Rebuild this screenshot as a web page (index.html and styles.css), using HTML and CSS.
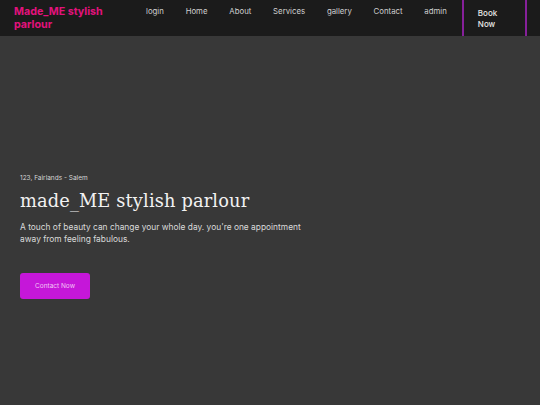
FILE: index.html
```html
<!DOCTYPE html>
<html lang="en">
<head>
<meta charset="utf-8">
<title>made_ME stylish parlour</title>
<link rel="stylesheet" href="styles.css">
</head>
<body>
<header class="topbar">
  <a class="brand" href="#">Made_ME stylish parlour</a>
  <nav class="nav">
    <a href="#">login</a>
    <a href="#">Home</a>
    <a href="#">About</a>
    <a href="#">Services</a>
    <a href="#">gallery</a>
    <a href="#">Contact</a>
    <a href="#">admin</a>
  </nav>
  <a class="book" href="#">Book<br>Now</a>
</header>
<main class="hero">
  <p class="address">123, Fairlands - Salem</p>
  <h1 class="title">made_ME stylish parlour</h1>
  <p class="lead">A touch of beauty can change your whole day. you're one appointment away from feeling fabulous.</p>
  <a class="cta" href="#">Contact Now</a>
</main>
</body>
</html>
```
FILE: styles.css
```css
* { box-sizing: border-box; }
html, body { margin: 0; padding: 0; }
body {
  background: #383838;
  font-family: "Inter", "DejaVu Sans", sans-serif;
  color: #e6e6e6;
  height: 405px;
  overflow: hidden;
}
a { text-decoration: none; color: inherit; }
.topbar {
  height: 36px;
  background: #1b1b1b;
  display: flex;
  align-items: stretch;
  padding-left: 14px;
}
.brand {
  width: 111px;
  padding-top: 5px;
  color: #e3127d;
  font-weight: 700;
  font-size: 10.7px;
  line-height: 13px;
}
.nav {
  display: flex;
  padding-left: 21px;
  padding-top: 6px;
  font-size: 7.8px;
  color: #cfcfcf;
}
.nav a { margin-right: 21.8px; line-height: 10px; }
.nav a:last-child { margin-right: 0; }
.book {
  margin-left: 15px;
  width: 65px;
  border-left: 2px solid #86209a;
  border-right: 2px solid #86209a;
  padding: 8px 0 0 14px;
  font-size: 8px;
  line-height: 11px;
  color: #e8e8e8;
  font-weight: 500;
}
.hero {
  padding: 137px 20px 0 20px;
}
.address {
  margin: 0;
  font-size: 6.5px;
  line-height: 10px;
  color: #d6d6d6;
}
.title {
  margin: 4px 0 0 0;
  font-family: "DejaVu Serif", serif;
  font-weight: 400;
  font-size: 17.8px;
  line-height: 28px;
  color: #f2f2f2;
  letter-spacing: 0.15px;
}
.lead {
  margin: 6px 0 0 0;
  width: 300px;
  font-size: 8.4px;
  line-height: 12px;
  color: #dadada;
}
.cta {
  display: inline-flex;
  align-items: center;
  justify-content: center;
  margin-top: 28px;
  width: 70px;
  height: 26px;
  background: #c517d9;
  border-radius: 3px;
  font-size: 6.5px;
  color: #f3c6f6;
}
```
